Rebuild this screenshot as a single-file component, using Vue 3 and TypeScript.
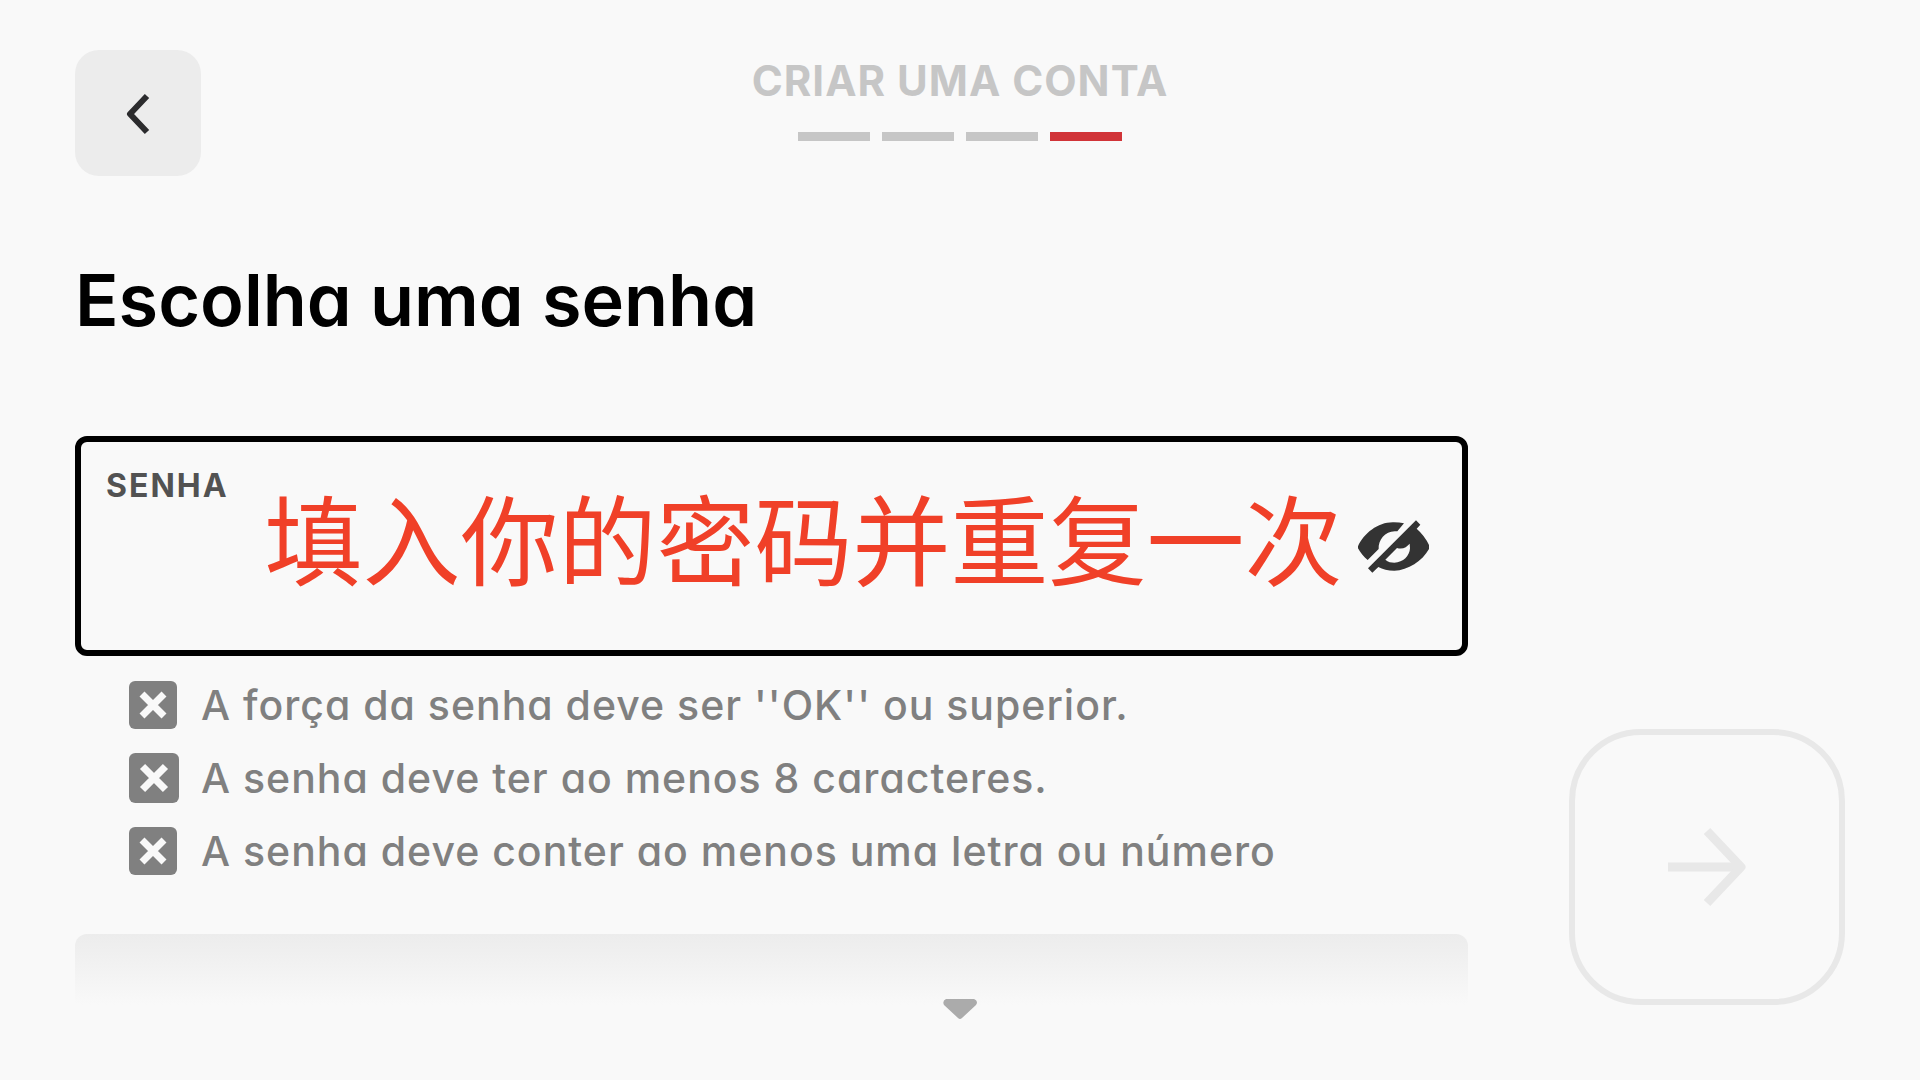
<script setup lang="ts">
import { ref } from 'vue'

const password = ref('填入你的密码并重复一次')
const steps = [1, 2, 3, 4]
const currentStep = 4
const rules = [
  { text: "A força da senha deve ser ''OK'' ou superior.", size: 48 },
  { text: 'A senha deve ter ao menos 8 caracteres.', size: 50 },
  { text: 'A senha deve conter ao menos uma letra ou número', size: 48 },
]
</script>

<template>
  <div class="page">
    <header class="top">
      <button class="back" type="button" aria-label="Voltar">
        <svg width="24" height="44" viewBox="0 -2 24 44" fill="none" stroke="#2b2b2d" stroke-width="6">
          <path d="M21 3 L4 21 L21 39" stroke-linejoin="round" />
        </svg>
      </button>
      <div class="progress">
        <p class="progress-title">CRIAR UMA CONTA</p>
        <div class="steps">
          <span v-for="s in steps" :key="s" class="step" :class="{ active: s === currentStep }"></span>
        </div>
      </div>
    </header>

    <main class="content">
      <section class="form">
        <h1>Escolha uma senha</h1>
        <div class="field">
          <label for="password">SENHA</label>
          <input id="password" v-model="password" type="text" />
          <button class="toggle" type="button" aria-label="Ocultar senha">
            <svg width="71" height="53" viewBox="0 0 213 157" fill="#333">
              <path d="M0 78 C18 38 62 4 108 6 Q124 6 138 9 L118 33 C85 28 60 56 62 86 L29 119 C18 110 6 96 0 84Z" />
              <path d="M174 0 L187 13 L176 25 Q200 46 213 74 L213 86 C193 122 150 150 109 151 Q80 151 61 140 L43 157 L30 144Z M82 118 C90 125 100 127 109 127 C136 127 155 106 156 84 L155 70 C146 80 135 88 117 83Z" fill-rule="evenodd" />
            </svg>
          </button>
        </div>
        <ul class="rules">
          <li v-for="rule in rules" :key="rule.text">
            <svg :width="rule.size" :height="rule.size" viewBox="0 0 48 48">
              <rect width="48" height="48" rx="6" fill="#808080" />
              <path d="M13 13 L35 35 M35 13 L13 35" stroke="#f9f9f9" stroke-width="7" />
            </svg>
            <span>{{ rule.text }}</span>
          </li>
        </ul>
        <div class="next-field"></div>
      </section>
      <button class="next" type="button" aria-label="Continuar" disabled>
        <svg width="78" height="80" viewBox="0 0 78 80" fill="none" stroke="#e8e8e8" stroke-width="9">
          <path d="M0 40 H70" />
          <path d="M39 4 L73 40 L39 76" stroke-linejoin="round" />
        </svg>
      </button>
    </main>

    <svg class="more" width="34" height="20" viewBox="0 0 34 20" fill="#ababab">
      <path d="M3 0 H31 Q34 1 34 4 L33 6 L19 19 Q17 21 15 19 L1 6 Q-1 2 3 0Z" />
    </svg>
  </div>
</template>

<style>
body {
  margin: 0;
  background: #f9f9f9;
}
</style>

<style scoped>
.page {
  box-sizing: border-box;
  position: relative;
  display: flex;
  flex-direction: column;
  min-height: 100vh;
  padding: 50px 75px 75px;
  background: #f9f9f9;
  font-family: Inter, "Noto Sans", "Noto Sans CJK SC", sans-serif;
  font-feature-settings: "cv11" 1;
}
button {
  padding: 0;
  border: 0;
  background: none;
}
svg {
  display: block;
}
.top {
  display: grid;
  grid-template-columns: 126px 1fr 126px;
}
.back {
  display: grid;
  place-items: center;
  height: 126px;
  border-radius: 24px;
  background: #ececec;
}
.progress {
  display: flex;
  flex-direction: column;
  align-items: center;
  padding-top: 5px;
}
.progress-title {
  margin: 0 0 25px;
  color: #c6c6c6;
  font-size: 42px;
  font-weight: 700;
  line-height: 52px;
  letter-spacing: 1px;
}
.steps {
  display: flex;
  gap: 12px;
}
.step {
  width: 72px;
  height: 9px;
  background: #c6c6c6;
}
.step.active {
  background: #d13438;
}
.content {
  display: grid;
  flex: 1;
  grid-template-columns: 1fr 276px;
  column-gap: 101px;
}
.form {
  display: flex;
  flex-direction: column;
  min-width: 0;
}
h1 {
  margin: 80px 0 92px;
  color: #000;
  font-size: 72px;
  font-weight: 600;
  line-height: 88px;
}
.field {
  display: flex;
  align-items: center;
  box-sizing: border-box;
  height: 220px;
  padding: 0 33px 0 25px;
  border: 6px solid #000;
  border-radius: 12px;
}
.field label {
  align-self: flex-start;
  margin-top: 24px;
  color: #525252;
  font-size: 32px;
  font-weight: 700;
  line-height: 40px;
  letter-spacing: 2px;
}
.field input {
  flex: 1;
  min-width: 0;
  height: 144px;
  margin: 0 0 22px 36px;
  padding: 0;
  border: 0;
  outline: 0;
  background: transparent;
  color: #f04028;
  font-family: "Noto Sans CJK SC", sans-serif;
  font-size: 98px;
}
.rules {
  display: flex;
  flex-direction: column;
  margin: 0;
  padding: 12px 0 0 54px;
  list-style: none;
}
.rules li {
  display: grid;
  grid-template-columns: 50px 1fr;
  align-items: center;
  column-gap: 22px;
  height: 73px;
  color: #808080;
  font-size: 41px;
  font-weight: 500;
  line-height: 50px;
  letter-spacing: 1px;
}
.next-field {
  height: 71px;
  margin-top: 47px;
  border-radius: 12px 12px 0 0;
  background: linear-gradient(#ececec, #f9f9f9);
}
.next {
  display: grid;
  place-items: center;
  align-self: end;
  box-sizing: border-box;
  height: 276px;
  border: 6px solid #e8e8e8;
  border-radius: 72px;
}
.more {
  position: absolute;
  bottom: 61px;
  left: calc(50% - 17px);
}
</style>
